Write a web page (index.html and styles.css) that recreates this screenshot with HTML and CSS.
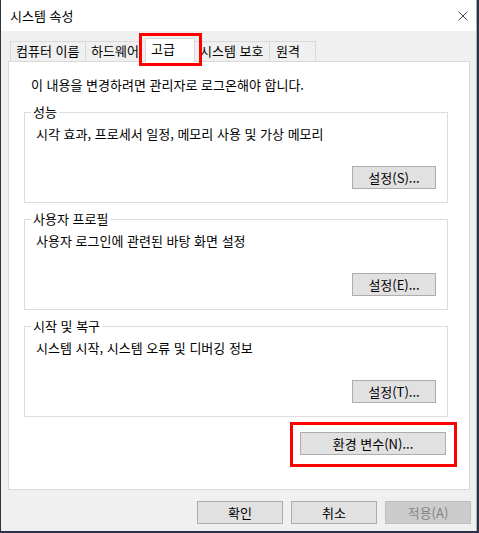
FILE: index.html
```html
<!DOCTYPE html>
<html lang="ko">
<head>
<meta charset="utf-8">
<title>시스템 속성</title>
<link rel="stylesheet" href="styles.css">
</head>
<body>
<div class="window">
  <div class="titlebar">
    <span class="title">시스템 속성</span>
    <svg class="close" width="10" height="10" viewBox="0 0 10 10"><path d="M0.5 0.5 L9.5 9.5 M9.5 0.5 L0.5 9.5" stroke="#444" stroke-width="1" fill="none"/></svg>
  </div>
  <div class="tabs">
    <div class="tab t1">컴퓨터 이름</div>
    <div class="tab t2">하드웨어</div>
    <div class="tab sel">고급</div>
    <div class="tab t4">시스템 보호</div>
    <div class="tab t5">원격</div>
  </div>
  <div class="panel">
    <p class="intro">이 내용을 변경하려면 관리자로 로그온해야 합니다.</p>
    <fieldset class="group">
      <legend>성능</legend>
      <p class="desc">시각 효과, 프로세서 일정, 메모리 사용 및 가상 메모리</p>
      <div class="grow"><button class="btn">설정(S)...</button></div>
    </fieldset>
    <fieldset class="group">
      <legend>사용자 프로필</legend>
      <p class="desc">사용자 로그인에 관련된 바탕 화면 설정</p>
      <div class="grow"><button class="btn">설정(E)...</button></div>
    </fieldset>
    <fieldset class="group">
      <legend>시작 및 복구</legend>
      <p class="desc">시스템 시작, 시스템 오류 및 디버깅 정보</p>
      <div class="grow"><button class="btn">설정(T)...</button></div>
    </fieldset>
    <div class="envrow"><button class="btn env">환경 변수(N)...</button></div>
  </div>
  <div class="footer">
    <button class="btn foot">확인</button>
    <button class="btn foot">취소</button>
    <button class="btn foot disabled">적용(A)</button>
  </div>
  <div class="mark mark-tab"></div>
  <div class="mark mark-env"></div>
</div>
</body>
</html>
```
FILE: styles.css
```css
* { box-sizing: border-box; }
html, body { margin: 0; padding: 0; }
body {
  background: #2b3446;
  font-family: "Noto Sans CJK KR", "Noto Sans", sans-serif;
  font-size: 13px;
  line-height: 16px;
  color: #000;
  width: 479px;
  height: 533px;
  overflow: hidden;
}
.window {
  position: relative;
  margin-left: 1px;
  width: 476px;
  height: 531px;
  background: #f0f0f0;
  border-right: 1px solid #b0b0b0;
}
.titlebar {
  height: 31px;
  background: #fff;
  display: flex;
  align-items: center;
  justify-content: space-between;
  padding: 0 8px 0 9px;
}
.close { display: block; }
.tabs {
  margin-top: 7px;
  height: 23px;
  padding-left: 9px;
  display: flex;
  align-items: flex-end;
  position: relative;
  z-index: 2;
}
.tab {
  height: 20px;
  border: 1px solid #d9d9d9;
  border-bottom: none;
  background: #f0f0f0;
  padding: 1px 0 0 5px;
  white-space: nowrap;
}
.t1 { width: 76px; }
.t2 { width: 63px; margin-left: -1px; }
.sel {
  width: 50px;
  height: 24px;
  margin-left: -3px;
  margin-bottom: -1px;
  background: #fff;
  padding-top: 2px;
  position: relative;
  z-index: 3;
}
.t4 { width: 78px; margin-left: -3px; padding-left: 7px; }
.t5 { width: 47px; margin-left: -1px; padding-left: 6px; }
.panel {
  position: relative;
  z-index: 1;
  margin-left: 7px;
  width: 462px;
  height: 429px;
  background: #fff;
  border: 1px solid #d9d9d9;
  padding: 15px 21px 0 15px;
}
.intro { margin: 0 0 11px; padding-left: 7px; }
.group {
  margin: 0 0 8px;
  padding: 0 11px 13px 11px;
  border: 1px solid #dcdcdc;
  min-width: 0;
}
.group legend {
  padding: 0 2px;
  margin-left: -5px;
  line-height: 16px;
}
.desc { margin: 6px 0 0; }
.grow { display: flex; justify-content: flex-end; }
.btn {
  font-family: inherit;
  font-size: 13px;
  line-height: 21px;
  height: 23px;
  width: 84px;
  margin: 24px 0 0;
  padding: 0;
  background: #e1e1e1;
  border: 1px solid #adadad;
  color: #000;
  text-align: center;
}
.envrow {
  display: flex;
  justify-content: flex-end;
  margin-top: 15px;
  padding-right: 2px;
}
.env { width: 146px; margin-top: 0; }
.footer {
  display: flex;
  justify-content: flex-end;
  gap: 8px;
  margin-top: 11px;
  padding-right: 5px;
}
.foot { width: 86px; margin: 0; }
.disabled {
  background: #cccccc;
  border-color: #bfbfbf;
  color: #838383;
}
.mark {
  position: absolute;
  border: 3px solid #f00;
  z-index: 5;
}
.mark-tab { left: 138px; top: 33px; width: 63px; height: 33px; }
.mark-env { left: 289px; top: 422px; width: 167px; height: 45px; }
```
